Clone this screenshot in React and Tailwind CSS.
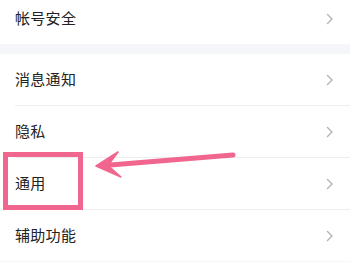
import React from 'react';

const Chevron = () => (
    <svg width="8" height="12" viewBox="0 0 8 12" className="shrink-0">
        <path d="M1.5 1.5 L6 6 L1.5 10.5" fill="none" stroke="#b3b3b3" strokeWidth="1.4" strokeLinecap="round" strokeLinejoin="round" />
    </svg>
);

const Row = ({ label, divider, extra = '' }) => (
    <div className={`flex items-center justify-between h-[51px] pl-[15px] pr-[16px] ${extra}`}>
        <span className="text-[15px] text-[#222222] tracking-[0.3px]">{label}</span>
        <Chevron />
    </div>
);

export default function App() {
    return (
        <div
            className="relative w-[350px] h-[262px] overflow-hidden bg-white"
            style={{ fontFamily: '"Noto Sans CJK SC", "Noto Sans", sans-serif' }}
        >
            <div className="-mt-[7px]">
                <Row label="帐号安全" />
            </div>
            <div className="h-[10px] bg-[#f4f6fa]" />
            <Row label="消息通知" />
            <div className="ml-[15px] h-px bg-[#eeeeee]" />
            <Row label="隐私" extra="h-[50px]" />
            <div className="ml-[15px] h-px bg-[#eeeeee]" />
            <Row label="通用" extra="h-[50px]" />
            <div className="ml-[15px] h-px bg-[#eeeeee]" />
            <Row label="辅助功能" extra="h-[50px]" />
            <div className="h-[10px] bg-[#f4f6fa]" />

            <div className="absolute left-[3px] top-[152px] w-[80px] h-[58px] border-[5px] border-[#f0668f]" />
            <svg className="absolute left-0 top-0" width="350" height="262">
                <line x1="233" y1="155" x2="104" y2="165.5" stroke="#f0668f" strokeWidth="5" strokeLinecap="round" />
                <path d="M96 166 L118 152 L108 165.5 L121 177 Z" fill="#f0668f" stroke="#f0668f" strokeWidth="1.5" strokeLinejoin="round" />
            </svg>
        </div>
    );
}
